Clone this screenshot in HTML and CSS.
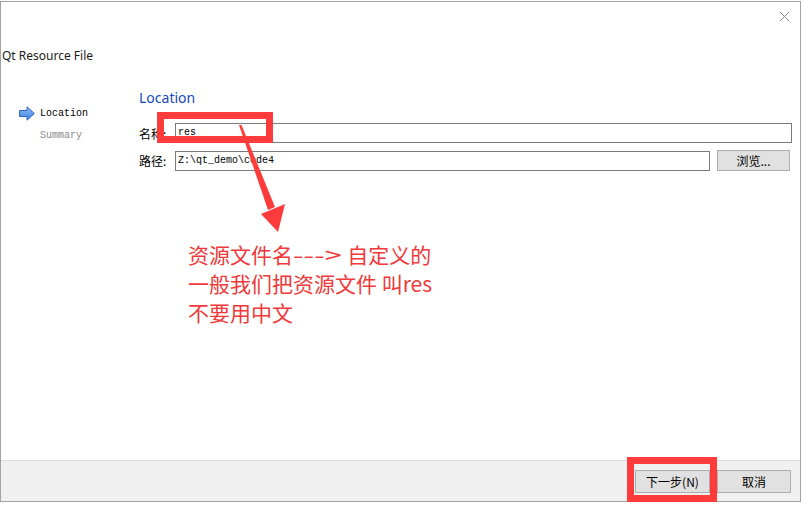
FILE: index.html
```html
<!DOCTYPE html>
<html lang="zh-CN">
<head>
<meta charset="UTF-8">
<title>Qt Resource File</title>
<link rel="stylesheet" href="styles.css">
</head>
<body>

<div class="window">
  <div class="titlebar">
    <svg class="close" width="11" height="11" viewBox="0 0 11 11">
      <path d="M1 1L10 10M10 1L1 10" stroke="#8a8a8a" stroke-width="1"/>
    </svg>
  </div>
  <div class="header">Qt Resource File</div>

  <div class="content">
    <ul class="nav">
      <li class="current">
        <svg class="nav-arrow" width="16" height="15" viewBox="0 0 16 15">
          <defs>
            <linearGradient id="blue" x1="0" y1="0" x2="0" y2="1">
              <stop offset="0" stop-color="#8fc0f7"/>
              <stop offset="1" stop-color="#3c7fe0"/>
            </linearGradient>
          </defs>
          <path d="M0.5 4.5H8V0.8L15.3 7.5L8 14.2V10.5H0.5Z" fill="url(#blue)" stroke="#2f66c0" stroke-width="1"/>
        </svg>
        <span>Location</span>
      </li>
      <li class="muted"><span>Summary</span></li>
    </ul>

    <div class="main">
      <h2 class="title">Location</h2>
      <div class="row">
        <label class="label">名称:</label>
        <div class="field mono">res</div>
      </div>
      <div class="row">
        <label class="label">路径:</label>
        <div class="field mono">Z:\qt_demo\code4</div>
        <button class="btn browse">浏览...</button>
      </div>
    </div>
  </div>

  <div class="footer">
    <button class="btn">下一步(<u>N</u>)</button>
    <button class="btn">取消</button>
  </div>
</div>

<!-- annotations drawn on top of the screenshot -->
<div class="mark mark-name"></div>
<div class="mark mark-next"></div>
<svg class="pointer" width="803" height="505" viewBox="0 0 803 505">
  <polygon points="239,125 241.5,125 275,207 268,210" fill="#ff3b3b"/>
  <polygon points="261,214 285,204 278,232" fill="#ff3b3b"/>
</svg>
<div class="note">
  资源文件名<span class="dash">---&gt;</span> 自定义的<br>
  一般我们把资源文件 叫res<br>
  不要用中文
</div>

</body>
</html>
```

FILE: styles.css
```css
* {
  box-sizing: border-box;
}

body {
  margin: 0;
  padding-top: 1px;
  width: 803px;
  height: 505px;
  background: #fff;
  font-family: "Noto Sans", "Noto Sans CJK SC", sans-serif;
  font-size: 12px;
  color: #000;
  position: relative;
  overflow: hidden;
}

.window {
  width: 801px;
  height: 501px;
  border: 1px solid #a3a3a3;
  display: flex;
  flex-direction: column;
  background: #fff;
}

.titlebar {
  height: 28px;
  display: flex;
  justify-content: flex-end;
  align-items: center;
  padding-right: 10px;
}

.header {
  margin-top: 18px;
  padding-left: 1px;
  line-height: 16px;
  font-size: 12px;
  color: #1a1a1a;
}

.content {
  flex: 1;
  display: flex;
}

.nav {
  list-style: none;
  margin: 0;
  padding: 38px 0 0 18px;
  width: 138px;
}

.nav li {
  height: 22px;
  display: flex;
  align-items: center;
  font-family: "Liberation Mono", monospace;
  font-size: 10px;
}

.nav li span {
  margin-left: 21px;
}

.nav li.current span {
  margin-left: 5px;
}

.nav li.muted {
  color: #8a8a8a;
}

.main {
  flex: 1;
  padding: 24px 8px 0 0;
}

.title {
  margin: 0 0 15px;
  font-size: 14px;
  font-weight: normal;
  line-height: 20px;
  color: #1448c4;
}

.row {
  display: flex;
  align-items: center;
  margin-bottom: 7px;
}

.label {
  width: 36px;
  font-family: "Noto Sans CJK SC", sans-serif;
  font-size: 12px;
}

.field {
  flex: 1;
  height: 20px;
  border: 1px solid #7a7a7a;
  padding: 0 2px;
  line-height: 18px;
  background: #fff;
}

.mono {
  font-family: "Liberation Mono", monospace;
  font-size: 10px;
}

.btn {
  width: 73px;
  height: 21px;
  border: 1px solid #adadad;
  background: #e1e1e1;
  font-family: "Noto Sans CJK SC", sans-serif;
  font-size: 12px;
  padding: 0;
  color: #000;
}

.browse {
  margin: 0 2px 0 7px;
}

.footer {
  height: 41px;
  border-top: 1px solid #dcdcdc;
  background: #f0f0f0;
  display: flex;
  justify-content: flex-end;
  align-items: center;
  gap: 7px;
  padding-right: 9px;
}

.footer .btn {
  height: 23px;
  width: 74px;
}

.footer .btn:first-child {
  width: 75px;
}

.footer u {
  text-decoration: none;
}

/* red annotation layer */
.mark {
  position: absolute;
  border: 7px solid #ff3b3b;
}

.mark-name {
  left: 157px;
  top: 112px;
  width: 116px;
  height: 31px;
}

.mark-next {
  left: 627px;
  top: 457px;
  width: 90px;
  height: 45px;
}

.pointer {
  position: absolute;
  left: 0;
  top: 0;
}

.note {
  position: absolute;
  left: 188px;
  top: 240px;
  font-family: "Noto Sans CJK SC", sans-serif;
  font-size: 21px;
  line-height: 29px;
  color: #f2383a;
}

.note .dash {
  display: inline-block;
  transform: scaleX(1.45);
  transform-origin: left center;
  margin-right: 16px;
}
```
